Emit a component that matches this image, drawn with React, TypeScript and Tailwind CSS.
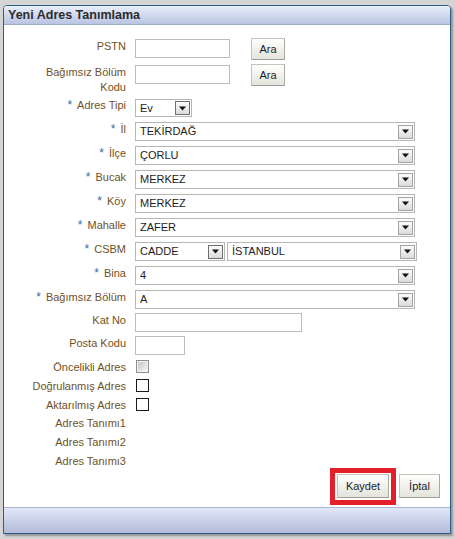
import React from 'react'

const labelColor = 'text-[#70511f]'

function Label({ req, children, pt = true }: { req?: boolean; children: React.ReactNode; pt?: boolean }) {
  return (
    <div className={`w-[122px] shrink-0 text-right leading-[13px] ${labelColor} ${pt ? 'pt-[1px]' : ''}`}>
      {req && <span className="mr-[5px] text-[12px] text-[#3b68a6]">*</span>}
      {children}
    </div>
  )
}

function Arrow({ dark }: { dark?: boolean }) {
  return (
    <span
      className={`flex h-[14px] w-[15px] shrink-0 items-center justify-center border bg-gradient-to-b from-[#fbfbfb] to-[#dcdcdc] ${
        dark ? 'border-[#6f6f6f]' : 'border-[#a3a3a3]'
      }`}
    >
      <svg width="7" height="5" viewBox="0 0 7 5" aria-hidden="true">
        <path d="M0 0.5 H7 L3.5 4.5 Z" fill="#111" />
      </svg>
    </span>
  )
}

function Select({ value, w, dark }: { value: string; w: string; dark?: boolean }) {
  return (
    <div className={`flex h-[19px] items-center justify-between border border-[#b6b6b6] bg-white pl-[4px] pr-[1px] text-[#1c1c1c] ${w}`}>
      <span>{value}</span>
      <Arrow dark={dark} />
    </div>
  )
}

function Field({ w, h = 'h-[19px]' }: { w: string; h?: string }) {
  return <input readOnly className={`${h} ${w} border border-[#bcbcbc] bg-white outline-none`} />
}

function Btn({ children, w }: { children: React.ReactNode; w: string }) {
  return (
    <button
      className={`flex items-center justify-center border border-[#c4c4bc] border-b-[#9f9f98] border-r-[#a9a9a2] bg-gradient-to-b from-[#ffffff] to-[#e4e4dc] text-[#1e1e1e] ${w}`}
    >
      {children}
    </button>
  )
}

function Row({ h, children }: { h: string; children: React.ReactNode }) {
  return <div className={`flex items-start gap-[9px] ${h}`}>{children}</div>
}

export default function App() {
  const selects: [string, string][] = [
    ['İl', 'TEKİRDAĞ'],
    ['İlçe', 'ÇORLU'],
    ['Bucak', 'MERKEZ'],
    ['Köy', 'MERKEZ'],
    ['Mahalle', 'ZAFER'],
  ]

  return (
    <div className="h-[539px] w-[455px] overflow-hidden bg-[#d5d5d5] pl-[3px] pt-[5px] font-['Liberation_Sans',Arial,sans-serif] text-[11px]">
      <div className="flex h-[529px] w-[448px] flex-col rounded-t-[4px] border border-[#2b5d86] bg-white shadow-[2px_2px_2px_rgba(0,0,0,0.3)]">
        <div className="flex h-[19px] shrink-0 items-center rounded-t-[3px] border-b border-[#9eabc6] bg-gradient-to-b from-[#e9eefa] to-[#b9c4e2] pl-[4px] text-[12.5px] font-bold text-[#2c2c2c]">
          Yeni Adres Tanımlama
        </div>

        <div className="flex flex-1 flex-col pt-[14px]">
          <Row h="h-[26px]">
            <Label>PSTN</Label>
            <Field w="w-[95px]" />
            <div className="-mt-[1px] ml-[12px]">
              <Btn w="w-[34px] h-[22px]">Ara</Btn>
            </div>
          </Row>
          <Row h="h-[33px]">
            <div className={`w-[122px] shrink-0 text-right leading-[15px] ${labelColor}`}>
              Bağımsız Bölüm
              <br />
              Kodu
            </div>
            <Field w="w-[95px]" />
            <div className="-mt-[1px] ml-[12px]">
              <Btn w="w-[34px] h-[22px]">Ara</Btn>
            </div>
          </Row>
          <Row h="h-[24px]">
            <Label req>Adres Tipi</Label>
            <div className="pt-[1px]">
              <Select value="Ev" w="w-[57px] !h-[18px]" dark />
            </div>
          </Row>
          {selects.map(([l, v]) => (
            <Row key={l} h="h-[24px]">
              <Label req>{l}</Label>
              <Select value={v} w="w-[280px]" />
            </Row>
          ))}
          <Row h="h-[24px]">
            <Label req>CSBM</Label>
            <div className="flex gap-[2px]">
              <Select value="CADDE" w="w-[90px]" dark />
              <Select value="İSTANBUL" w="w-[190px]" />
            </div>
          </Row>
          <Row h="h-[24px]">
            <Label req>Bina</Label>
            <Select value="4" w="w-[280px]" />
          </Row>
          <Row h="h-[23px]">
            <Label req>Bağımsız Bölüm</Label>
            <Select value="A" w="w-[280px]" />
          </Row>
          <Row h="h-[23px]">
            <Label>Kat No</Label>
            <Field w="w-[167px]" />
          </Row>
          <Row h="h-[25px]">
            <Label>Posta Kodu</Label>
            <Field w="w-[50px]" />
          </Row>
          <Row h="h-[19px]">
            <Label pt={false}>Öncelikli Adres</Label>
            <span className="ml-[1px] -mt-[1px] flex h-[13px] w-[13px] items-center justify-center border border-[#8e8e8e] bg-[#f2f2f2]">
              <span className="h-[9px] w-[9px] bg-gradient-to-br from-[#c9c9c9] to-[#f4f4f4]" />
            </span>
          </Row>
          <Row h="h-[19px]">
            <Label pt={false}>Doğrulanmış Adres</Label>
            <span className="ml-[1px] -mt-[1px] h-[13px] w-[13px] border border-[#1a1a1a] bg-white" />
          </Row>
          <Row h="h-[18px]">
            <Label pt={false}>Aktarılmış Adres</Label>
            <span className="ml-[1px] -mt-[1px] h-[13px] w-[13px] border border-[#1a1a1a] bg-white" />
          </Row>
          <Row h="h-[19px]">
            <Label pt={false}>Adres Tanımı1</Label>
          </Row>
          <Row h="h-[19px]">
            <Label pt={false}>Adres Tanımı2</Label>
          </Row>
          <Row h="h-[13px]">
            <Label pt={false}>Adres Tanımı3</Label>
          </Row>

          <div className="flex items-start justify-end gap-[3px] pr-[10px]">
            <div className="border-[5px] border-[#e3202a] px-[2px] pb-[2px] pt-[1px]">
              <Btn w="w-[52px] h-[24px]">Kaydet</Btn>
            </div>
            <div className="pt-[6px]">
              <Btn w="w-[41px] h-[24px]">İptal</Btn>
            </div>
          </div>
        </div>

        <div className="h-[26px] shrink-0 border-t border-[#a9b8d6] bg-gradient-to-b from-[#e2e8f8] to-[#b2bbd8]" />
      </div>
    </div>
  )
}
